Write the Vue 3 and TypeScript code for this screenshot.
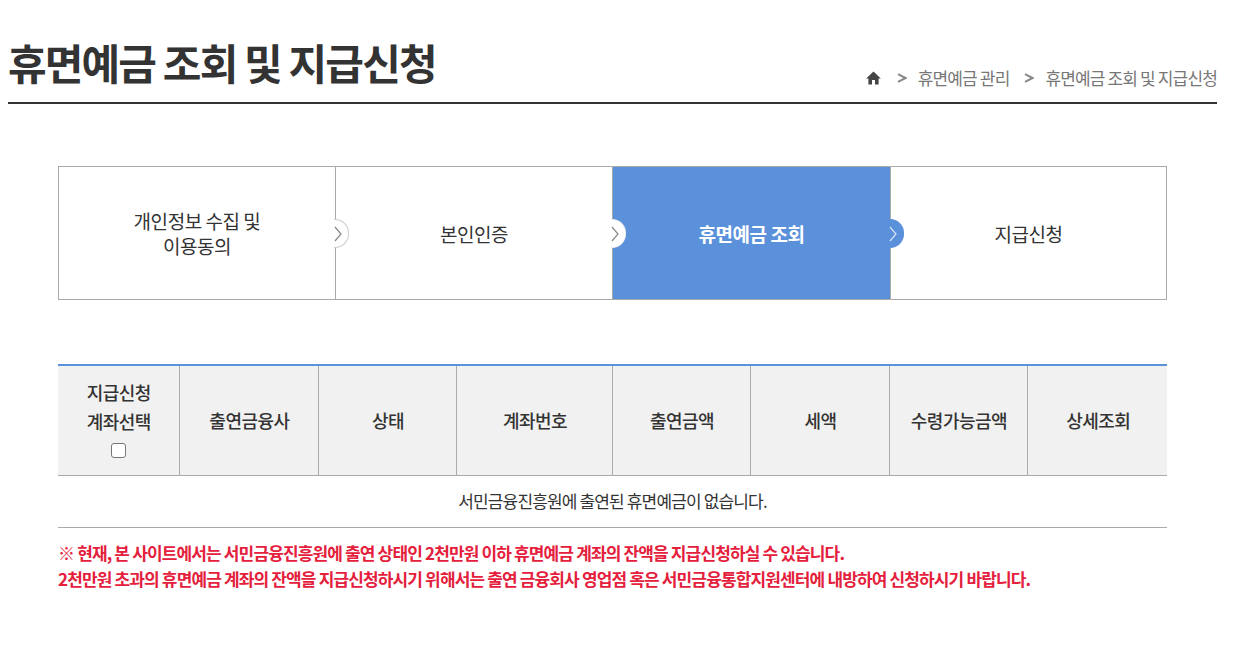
<script setup lang="ts">
const steps = [
  { label: ['개인정보 수집 및', '이용동의'], active: false, arrow: 'a' },
  { label: ['본인인증'], active: false, arrow: 'b' },
  { label: ['휴면예금 조회'], active: true, arrow: 'c' },
  { label: ['지급신청'], active: false, arrow: '' },
]
const cols = ['출연금융사', '상태', '계좌번호', '출연금액', '세액', '수령가능금액', '상세조회']
</script>

<template>
  <div class="page">
    <header class="head">
      <h1 class="title">휴면예금 조회 및 지급신청</h1>
      <nav class="crumbs">
        <svg class="home" width="15" height="14" viewBox="0 0 15 14"><path d="M7.5 0.6 L14.8 7.6 H12.6 V13.6 H9 V9 H6 V13.6 H2.4 V7.6 H0.2 Z" fill="#444" /></svg>
        <svg class="sep" width="10" height="10" viewBox="0 0 10 10"><path d="M1 1.2 L8.6 5 L1 8.8" fill="none" stroke="#888" stroke-width="2" /></svg>
        <span class="crumb">휴면예금 관리</span>
        <svg class="sep" width="10" height="10" viewBox="0 0 10 10"><path d="M1 1.2 L8.6 5 L1 8.8" fill="none" stroke="#888" stroke-width="2" /></svg>
        <span>휴면예금 조회 및 지급신청</span>
      </nav>
    </header>
    <main class="content">
      <ol class="steps">
        <li v-for="s in steps" :key="s.label[0]" class="step" :class="{ on: s.active }">
          <span v-for="l in s.label" :key="l" class="line">{{ l }}</span>
          <span v-if="s.arrow" class="arrow" :class="s.arrow">
            <svg width="8" height="16" viewBox="0 0 8 16"><path d="M1 1 L7 8 L1 15" fill="none" stroke="currentColor" stroke-width="1.2" /></svg>
          </span>
        </li>
      </ol>
      <table class="tbl">
        <colgroup>
          <col style="width: 121px" /><col style="width: 139px" /><col style="width: 138px" /><col style="width: 156px" />
          <col style="width: 138px" /><col style="width: 139px" /><col style="width: 138px" /><col style="width: 140px" />
        </colgroup>
        <thead>
          <tr>
            <th><span class="th-in">지급신청<br />계좌선택<br /><input type="checkbox" class="chk" /></span></th>
            <th v-for="c in cols" :key="c">{{ c }}</th>
          </tr>
        </thead>
        <tbody>
          <tr><td colspan="8">서민금융진흥원에 출연된 휴면예금이 없습니다.</td></tr>
        </tbody>
      </table>
      <p class="notice">※ 현재, 본 사이트에서는 서민금융진흥원에 출연 상태인 2천만원 이하 휴면예금 계좌의 잔액을 지급신청하실 수 있습니다.<br />2천만원 초과의 휴면예금 계좌의 잔액을 지급신청하시기 위해서는 출연 금융회사 영업점 혹은 서민금융통합지원센터에 내방하여 신청하시기 바랍니다.</p>
    </main>
  </div>
</template>

<style>
html, body { margin: 0; background: #fff; }
</style>

<style scoped>
.page {
  padding: 0 19px 0 8px;
  font-family: "Noto Sans CJK KR", "Noto Sans", sans-serif;
  color: #333;
}
.head {
  height: 104px;
  box-sizing: border-box;
  border-bottom: 2px solid #333;
  display: flex;
  justify-content: space-between;
  align-items: flex-end;
}
.title {
  margin: 0 0 9px;
  font-size: 42px;
  line-height: 62px;
  font-weight: 700;
  letter-spacing: -1.85px;
  color: #333;
}
.crumbs {
  display: flex;
  align-items: center;
  font-size: 17px;
  letter-spacing: -0.85px;
  line-height: 24px;
  color: #777;
  margin-bottom: 12px;
}
.home { margin-right: 16px; }
.sep { margin-right: 11px; }
.crumb { margin-right: 15px; }
.content { padding: 62px 50px 0 50px; }
.steps {
  list-style: none;
  margin: 0;
  padding: 0;
  display: grid;
  grid-template-columns: 277px 277px 278px 1fr;
  height: 134px;
  box-sizing: border-box;
  border: 1px solid #aaa;
}
.step {
  position: relative;
  display: flex;
  flex-direction: column;
  align-items: center;
  justify-content: center;
  font-size: 19px;
  line-height: 25px;
  letter-spacing: -0.45px;
  color: #333;
  border-right: 1px solid #aaa;
}
.step:last-child { border-right: 0; }
.step.on {
  background: #5b90db;
  color: #fff;
  font-weight: 700;
}
.arrow {
  position: absolute;
  top: 52px;
  right: -14px;
  width: 14px;
  height: 27px;
  border-radius: 0 14px 14px 0;
  background: #fff;
  color: #888;
  border: 1px solid #ccc;
  border-left: 0;
  display: flex;
  align-items: center;
  z-index: 1;
}
.arrow.b { border-color: #eee; }
.arrow.c { background: #5b90db; border-color: #5b90db; color: #d5e2f5; }
.arrow svg { margin-left: 0; flex: none; }
.tbl {
  margin-top: 64px;
  width: 1109px;
  table-layout: fixed;
  border-collapse: collapse;
  border-top: 2px solid #5b90db;
}
.tbl th {
  background: #f1f1f1;
  height: 109px;
  padding: 0 0 0 2px;
  font-size: 18px;
  font-weight: 500;
  line-height: 29px;
  letter-spacing: -0.5px;
  color: #333;
  border-left: 1px solid #aaa;
  border-bottom: 1px solid #aaa;
}
.tbl th:first-child { border-left: 0; padding-left: 1px; }
.th-in { display: block; padding-top: 1px; }
.chk {
  appearance: none;
  display: inline-block;
  width: 15px;
  height: 15px;
  margin: 7px 0 0;
  background: #fff;
  border: 1px solid #777;
  border-radius: 3px;
  vertical-align: top;
}
.tbl td {
  height: 52px;
  padding: 0 0 2px;
  box-sizing: border-box;
  text-align: center;
  font-size: 17px;
  letter-spacing: -0.85px;
  color: #333;
  border-bottom: 1px solid #aaa;
}
.notice {
  margin: 12px 0 0;
  font-size: 17px;
  line-height: 26px;
  font-weight: 700;
  letter-spacing: -0.86px;
  color: #e4203c;
}
</style>
